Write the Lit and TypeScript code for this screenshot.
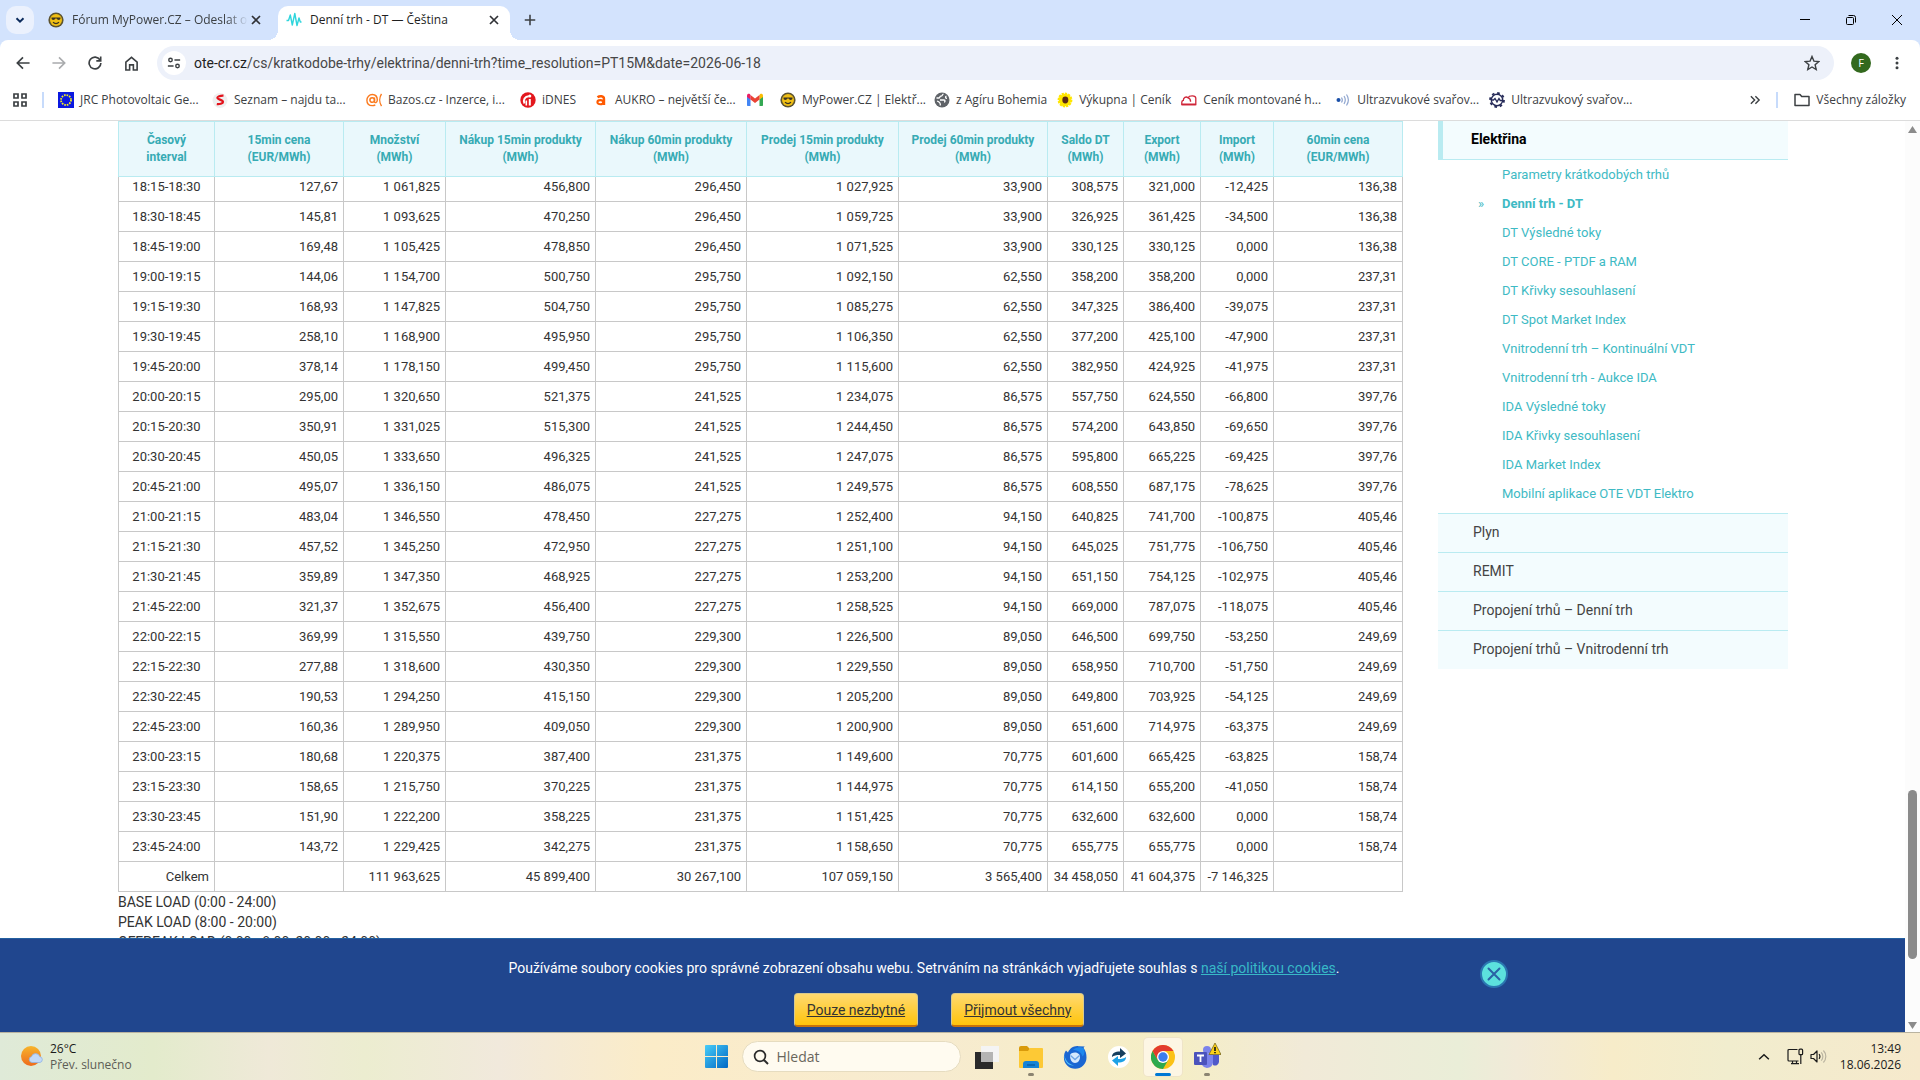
import { LitElement, html, css, svg, type TemplateResult } from "lit";
import { customElement } from "lit/decorators.js";

/* ---------- data ---------- */

const COLUMNS: [string, string, number][] = [
  ["Časový", "interval", 96],
  ["15min cena", "(EUR/MWh)", 129],
  ["Množství", "(MWh)", 102],
  ["Nákup 15min produkty", "(MWh)", 150],
  ["Nákup 60min produkty", "(MWh)", 151],
  ["Prodej 15min produkty", "(MWh)", 152],
  ["Prodej 60min produkty", "(MWh)", 149],
  ["Saldo DT", "(MWh)", 76],
  ["Export", "(MWh)", 77],
  ["Import", "(MWh)", 73],
  ["60min cena", "(EUR/MWh)", 129],
];

const ROWS: string[][] = `
18:15-18:30|127,67|1 061,825|456,800|296,450|1 027,925|33,900|308,575|321,000|-12,425|136,38
18:30-18:45|145,81|1 093,625|470,250|296,450|1 059,725|33,900|326,925|361,425|-34,500|136,38
18:45-19:00|169,48|1 105,425|478,850|296,450|1 071,525|33,900|330,125|330,125|0,000|136,38
19:00-19:15|144,06|1 154,700|500,750|295,750|1 092,150|62,550|358,200|358,200|0,000|237,31
19:15-19:30|168,93|1 147,825|504,750|295,750|1 085,275|62,550|347,325|386,400|-39,075|237,31
19:30-19:45|258,10|1 168,900|495,950|295,750|1 106,350|62,550|377,200|425,100|-47,900|237,31
19:45-20:00|378,14|1 178,150|499,450|295,750|1 115,600|62,550|382,950|424,925|-41,975|237,31
20:00-20:15|295,00|1 320,650|521,375|241,525|1 234,075|86,575|557,750|624,550|-66,800|397,76
20:15-20:30|350,91|1 331,025|515,300|241,525|1 244,450|86,575|574,200|643,850|-69,650|397,76
20:30-20:45|450,05|1 333,650|496,325|241,525|1 247,075|86,575|595,800|665,225|-69,425|397,76
20:45-21:00|495,07|1 336,150|486,075|241,525|1 249,575|86,575|608,550|687,175|-78,625|397,76
21:00-21:15|483,04|1 346,550|478,450|227,275|1 252,400|94,150|640,825|741,700|-100,875|405,46
21:15-21:30|457,52|1 345,250|472,950|227,275|1 251,100|94,150|645,025|751,775|-106,750|405,46
21:30-21:45|359,89|1 347,350|468,925|227,275|1 253,200|94,150|651,150|754,125|-102,975|405,46
21:45-22:00|321,37|1 352,675|456,400|227,275|1 258,525|94,150|669,000|787,075|-118,075|405,46
22:00-22:15|369,99|1 315,550|439,750|229,300|1 226,500|89,050|646,500|699,750|-53,250|249,69
22:15-22:30|277,88|1 318,600|430,350|229,300|1 229,550|89,050|658,950|710,700|-51,750|249,69
22:30-22:45|190,53|1 294,250|415,150|229,300|1 205,200|89,050|649,800|703,925|-54,125|249,69
22:45-23:00|160,36|1 289,950|409,050|229,300|1 200,900|89,050|651,600|714,975|-63,375|249,69
23:00-23:15|180,68|1 220,375|387,400|231,375|1 149,600|70,775|601,600|665,425|-63,825|158,74
23:15-23:30|158,65|1 215,750|370,225|231,375|1 144,975|70,775|614,150|655,200|-41,050|158,74
23:30-23:45|151,90|1 222,200|358,225|231,375|1 151,425|70,775|632,600|632,600|0,000|158,74
23:45-24:00|143,72|1 229,425|342,275|231,375|1 158,650|70,775|655,775|655,775|0,000|158,74
`.trim().split("\n").map((line) => line.split("|"));

const TOTALS = ["Celkem", "", "111 963,625", "45 899,400", "30 267,100", "107 059,150", "3 565,400", "34 458,050", "41 604,375", "-7 146,325", ""];

const SUBMENU = [
  "Parametry krátkodobých trhů", "Denní trh - DT", "DT Výsledné toky", "DT CORE - PTDF a RAM",
  "DT Křivky sesouhlasení", "DT Spot Market Index", "Vnitrodenní trh – Kontinuální VDT",
  "Vnitrodenní trh - Aukce IDA", "IDA Výsledné toky", "IDA Křivky sesouhlasení",
  "IDA Market Index", "Mobilní aplikace OTE VDT Elektro",
];

const SECTIONS = ["Plyn", "REMIT", "Propojení trhů – Denní trh", "Propojení trhů – Vnitrodenní trh"];

/* ---------- icons ---------- */

const icon = (size: number, body: TemplateResult, box = 16) =>
  html`<svg width=${size} height=${size} viewBox="0 0 ${box} ${box}" fill="none" aria-hidden="true">${body}</svg>`;

const sunFace = svg`<circle cx="8" cy="8" r="7.6" fill="#5c5330"/><circle cx="8" cy="8" r="6" fill="#f0bf14"/>
  <path d="M3.500 5.400h9v.9c0 1-.8 1.700-1.800 1.700s-1.800-.6-2.100-1.400H7.400C7.100 7.400 6.300 8 5.300 8s-1.800-.7-1.800-1.700z" fill="#3a3322"/>
  <path d="M5 10.200c1.600 1.800 4.400 1.800 6 0" stroke="#3a3322" stroke-width="1.200"/>`;
const euFlag = svg`<rect width="16" height="16" fill="#0a18e0"/><circle cx="8" cy="8" r="5" stroke="#f5ee20" stroke-width="1.800" stroke-dasharray="1.600 1.018"/>`;
const seznam = svg`<circle cx="8" cy="8.500" r="7.500" fill="#efefef"/><path d="M11.500 3.700C8.500 3.500 5 4.600 5.500 6.200c.5 1.300 5.500 1.800 5.500 3.800 0 1.600-3.800 2.500-6.200 2.100" stroke="#e3121b" stroke-width="2.200"/>`;
const bazos = svg`<circle cx="6.200" cy="8" r="2.300" stroke="#fb7a1e" stroke-width="1.500"/><path d="M8.500 5.500v4c0 2 2.800 1.300 2.800-1.500 0-3.300-2-5.500-5-5.500S.9 5 .9 8.200s2 5.400 5.400 5.400c1.200 0 2.200-.3 3-.8M15.500 2c-2.300 3.500-2.300 8.500 0 12" stroke="#fb7a1e" stroke-width="1.400"/>`;
const idnes = svg`<circle cx="8" cy="8" r="7.700" fill="#e3171d"/><path d="M9.800 7v6.500M4.500 11.500c-1.800-3.500.5-7.300 4.300-7.300" stroke="#fff" stroke-width="2"/><circle cx="9.800" cy="4" r="1.500" fill="#fff"/><path d="M6.300 8.500v5" stroke="#fff" stroke-width="1.600"/>`;
const aukro = svg`<path d="M4.500 5.300c2-1.500 6.500-1.700 6.500 1.700V13" stroke="#ff5a00" stroke-width="2.400"/><ellipse cx="7.300" cy="10.200" rx="2.900" ry="2.100" stroke="#ff5a00" stroke-width="2.100"/>`;
const gmail = svg`<path d="M0 3.500V13c0 .6.400 1 1 1h2.500V7z" fill="#4285f4"/><path d="M12.500 14H15c.6 0 1-.4 1-1V3.500L12.500 7z" fill="#34a853"/><path d="M12.500 3v4.500L16 5V3.600c0-1.600-1.800-2.300-3-1.400z" fill="#fbbc04"/><path d="M3.500 7.500V3L8 6.500 12.500 3v4.500L8 11z" fill="#ea4335"/><path d="M0 3.600V5l3.500 2.500V3L3 2.200C1.800 1.300 0 2 0 3.600z" fill="#e91e63"/>`;
const globe = svg`<circle cx="8" cy="8" r="7.500" fill="#5f6368"/><path d="M9.500 2c-1.500.5-1 2.200-2.600 2.200C5.600 4.200 6 6 4.700 6H2.500M6 8h4c1.400 0 1.400 2.200 0 2.200M12.500 4c-1.500.6-1.200 2.400.5 2.400M3 9c2.500.8 3.700 2 3.300 4.500" stroke="#fff" stroke-width="1.300"/>`;
const sunflower = svg`<circle cx="8" cy="8" r="6.300" fill="#ffe600" stroke="#ffe600" stroke-width="2.200" stroke-dasharray="2.200 1"/><ellipse cx="8.300" cy="8" rx="3" ry="3.400" fill="#5b2a12"/>`;
const houses = svg`<path d="M.8 12.600v-2.300c0-1 .5-1.700 1.500-1.900 0-2.800 2.700-4.300 4.700-2.700C8.200 3.300 14.800 3 14.800 6.200v6.400z" stroke="#cf2538" stroke-width="1.300"/><path d="M.8 12.400h14" stroke="#cf2538" stroke-width="1.800"/><path d="M7 5.700c1.600.6 2.600 1.600 2.600 4" stroke="#cf2538" stroke-width="1.300"/>`;
const sonic = svg`<circle cx="3.500" cy="8" r="2" fill="#1a4fa8"/><path d="M6.500 5.500c1 1.500 1 3.500 0 5M9 4c1.600 2.500 1.600 5.500 0 8M11.500 2.500c2.400 3.500 2.400 7.500 0 11" stroke="#8fa5cf" stroke-width="1.200"/>`;
const gear = svg`<circle cx="8" cy="8" r="5.700" stroke="#262b59" stroke-width="1.400"/><circle cx="8" cy="8" r="7" stroke="#262b59" stroke-width="1.800" stroke-dasharray="2.600 2.898"/><path d="M2.500 8h2L6 6.500l2 3.400 2-3.400L11.200 8.500h2.300" stroke="#262b59" stroke-width="1.300"/>`;
const wave = svg`<path d="M.5 8.500h2L4.300 3l2 10L8.800 1.500l2.200 12L13 6l1.300 4h1.200" stroke="#2fd5dc" stroke-width="1.400" stroke-linejoin="round"/>`;
const cross = svg`<path d="M4 4l8 8M12 4l-8 8" stroke="#303236" stroke-width="1.700"/>`;

const BOOKMARKS: [string, TemplateResult, string][] = [
  ["JRC Photovoltaic Ge...", euFlag, "wide"],
  ["Seznam – najdu ta...", seznam, "wide"],
  ["Bazos.cz - Inzerce, i...", bazos, "wide"],
  ["iDNES", idnes, ""],
  ["AUKRO – největší če...", aukro, "wide"],
  ["", gmail, ""],
  ["MyPower.CZ | Elektř...", sunFace, "wide"],
  ["z Agíru Bohemia", globe, "short"],
  ["Výkupna | Ceník", sunflower, "short"],
  ["Ceník montované h...", houses, "wide"],
  ["Ultrazvukové svařov...", sonic, "wide"],
  ["Ultrazvukový svařov...", gear, "wide"],
];

/* ---------- browser chrome ---------- */

@customElement("browser-chrome")
class BrowserChrome extends LitElement {
  static styles = css`
    :host { display: block; font: 12px/16px "Segoe UI", "Open Sans", sans-serif; color: #3c4043; background: #d3e3fd; }
    button { border: 0; padding: 0; margin: 0; background: none; font: inherit; color: inherit; display: grid; place-items: center; }
    svg { display: block; flex: none; }
    .tabs { display: flex; height: 40px; padding-left: 6px; }
    .search { width: 28px; height: 28px; margin: 6px 14px 0 0; border-radius: 10px; background: #ebf1fd; }
    .tab { display: flex; align-items: center; gap: 8px; height: 28px; margin-top: 6px; }
    .idle { width: 216px; margin-right: 14px; }
    .idle .title { margin-right: -8px; }
    .title { flex: 1; overflow: hidden; white-space: nowrap; }
    .fade { mask-image: linear-gradient(90deg, #000 88%, transparent); }
    .active { position: relative; box-sizing: border-box; width: 232px; height: 34px; padding: 0 8px 6px 8px; background: #fff; border-radius: 10px 10px 0 0; color: #1f1f1f; }
    .active::before, .active::after { content: ""; position: absolute; bottom: 0; width: 10px; height: 10px; }
    .active::before { left: -10px; background: radial-gradient(circle at 0 0, transparent 10px, #fff 10px); }
    .active::after { right: -10px; background: radial-gradient(circle at 100% 0, transparent 10px, #fff 10px); }
    .plus { width: 28px; margin-left: 6px; }
    .window { display: flex; margin-left: auto; }
    .window button { width: 46px; height: 40px; }
    .bar { display: flex; align-items: center; height: 46px; padding: 0 9px; background: #fff; border-radius: 8px 8px 0 0; }
    .nav { width: 36px; height: 34px; margin-left: -4px; margin-right: 4px; }
    .address { flex: 1; display: flex; align-items: center; height: 34px; margin: 0 17px 0 4px; padding: 0 14px 0 5px; border-radius: 17px; background: #edf1fa; }
    .info { width: 24px; height: 24px; border-radius: 12px; background: #fff; margin-right: 8px; }
    .url { flex: 1; font: 14px/20px "Segoe UI", Roboto, sans-serif; color: #474747; outline: 0; }
    .host { color: #1f1f1f; }
    .avatar { width: 20px; height: 20px; border-radius: 10px; background: #33691e; color: #fff; font-size: 11px; }
    .menu { width: 20px; height: 28px; margin: 0 4px 0 16px; }
    .marks { display: flex; align-items: center; height: 28px; padding: 0 14px 6px 12px; background: #fff; border-bottom: 1px solid #dcdcdc; }
    .rule { width: 2px; height: 16px; background: #c7dbfb; }
    .apps { margin-right: 14px; }
    .list { display: flex; margin-left: 14px; flex: 1; min-width: 0; }
    .mark { display: flex; align-items: center; gap: 6px; margin-right: 17px; color: inherit; text-decoration: none; white-space: nowrap; }
    .wide { width: 137px; }
    .short { margin-right: 10px; }
    .more { margin-right: 15px; }
    .all { display: flex; align-items: center; gap: 6px; margin-left: 16px; white-space: nowrap; }
  `;

  render() {
    return html`
      <div class="tabs">
        <button class="search" aria-label="Hledat na kartách">${icon(14, svg`<path d="M4 6l4 4 4-4" stroke="#0b2a5c" stroke-width="2.200"/>`)}</button>
        <div class="tab idle">${icon(16, sunFace)}<span class="title fade">Fórum MyPower.CZ – Odeslat o</span>
          <button aria-label="Zavřít">${icon(16, cross)}</button></div>
        <div class="tab active">${icon(16, wave)}<span class="title">Denní trh - DT — Čeština</span>
          <button aria-label="Zavřít">${icon(16, cross)}</button></div>
        <button class="plus" aria-label="Nová karta">${icon(14, svg`<path d="M8 2v12M2 8h12" stroke="#3c4043" stroke-width="1.800"/>`)}</button>
        <div class="window">
          <button aria-label="Minimalizovat">${icon(10, svg`<path d="M0 4.500h10" stroke="#000"/>`, 10)}</button>
          <button aria-label="Obnovit">${icon(10, svg`<rect x=".5" y="2.500" width="7" height="7" rx="1" stroke="#000"/><path d="M2.500.5h5a2 2 0 012 2v5" stroke="#000"/>`, 10)}</button>
          <button aria-label="Zavřít okno">${icon(10, svg`<path d="M0 0l10 10M10 0L0 10" stroke="#000"/>`, 10)}</button>
        </div>
      </div>
      <div class="bar">
        <button class="nav" aria-label="Zpět">${icon(14, svg`<path d="M15.500 8H2M8 1.500L1.500 8 8 14.500" stroke="#3c4043" stroke-width="1.900"/>`)}</button>
        <button class="nav" aria-label="Vpřed">${icon(14, svg`<path d="M.5 8H14M8 1.500L14.500 8 8 14.500" stroke="#a9abad" stroke-width="1.900"/>`)}</button>
        <button class="nav" aria-label="Obnovit stránku">${icon(14, svg`<path d="M13.700 4.500A6.700 6.700 0 1014.700 8M14.500.5v5h-5" stroke="#3c4043" stroke-width="1.900"/>`)}</button>
        <button class="nav" aria-label="Domů">${icon(15, svg`<path d="M2 6.500L8 1.500l6 5V15h-4V9.500H6V15H2z" stroke="#3c4043" stroke-width="1.700"/>`)}</button>
        <div class="address">
          <button class="info" aria-label="Informace o webu">${icon(14, svg`<circle cx="4" cy="4.500" r="2" stroke="#3c4043" stroke-width="1.600"/><circle cx="12" cy="11.500" r="2" stroke="#3c4043" stroke-width="1.600"/><path d="M8.500 4.500H15M1 11.500h6.500" stroke="#3c4043" stroke-width="1.700"/>`)}</button>
          <div class="url" role="textbox" aria-label="Adresa" contenteditable="plaintext-only" spellcheck="false"><span class="host">ote-cr.cz</span>/cs/kratkodobe-trhy/elektrina/denni-trh?time_resolution=PT15M&amp;date=2026-06-18</div>
          <button aria-label="Přidat záložku">${icon(16, svg`<path d="M8 1.500l1.900 4.600 4.900.4-3.700 3.200 1.100 4.800L8 12l-4.200 2.500 1.100-4.800L1.200 6.500l4.900-.4z" stroke="#3c4043" stroke-width="1.400"/>`)}</button>
        </div>
        <button class="avatar" aria-label="Profil">F</button>
        <button class="menu" aria-label="Nabídka">${icon(16, svg`<circle cx="8" cy="3.200" r="1.500" fill="#3c4043"/><circle cx="8" cy="8" r="1.500" fill="#3c4043"/><circle cx="8" cy="12.800" r="1.500" fill="#3c4043"/>`)}</button>
      </div>
      <nav class="marks">
        <button class="apps" aria-label="Aplikace">${icon(16, svg`<path d="M2 2h4v4H2zM10 2h4v4h-4zM2 10h4v4H2zM10 10h4v4h-4z" stroke="#3c4043" stroke-width="1.700"/>`)}</button>
        <span class="rule"></span>
        <div class="list">
          ${BOOKMARKS.map(([label, art, size]) => html`<a class="mark ${size}" href="#" aria-label=${label || "Gmail"}>${icon(16, art)}${label}</a>`)}
        </div>
        <button class="more" aria-label="Další záložky">${icon(12, svg`<path d="M2.500 3l5 5-5 5M8.500 3l5 5-5 5" stroke="#3c4043" stroke-width="1.900"/>`)}</button>
        <span class="rule"></span>
        <button class="all">${icon(16, svg`<path d="M1 13.500v-11h5l1.700 2H15v9z" stroke="#3c4043" stroke-width="1.500" stroke-linejoin="round"/>`)}Všechny záložky</button>
      </nav>`;
  }
}

/* ---------- price table ---------- */

@customElement("price-table")
class PriceTable extends LitElement {
  static styles = css`
    :host { display: block; font: 14px/20px Roboto, sans-serif; color: #333; }
    table { width: 100%; table-layout: fixed; border-collapse: collapse; font-size: 13px; line-height: 20px; }
    th { height: 55px; padding: 0 2px; box-sizing: border-box; border: 1px solid #b9ebf1; background: #eaf8fc; color: #37abb4; font-size: 12px; line-height: 17px; font-weight: 700; text-align: center; white-space: nowrap; }
    td { height: 29px; padding: 0 5px; border: 1px solid #c8c8c8; text-align: right; white-space: nowrap; }
    .period { text-align: center; }
    /* partly hidden under the pinned header */
    .cut td { height: 25px; line-height: 14px; padding-bottom: 5px; box-sizing: border-box; }
    p { margin: 0; }
  `;

  render() {
    return html`
      <table>
        <colgroup>${COLUMNS.map(([, , w]) => html`<col style="width:${w}px">`)}</colgroup>
        <thead><tr>${COLUMNS.map(([a, b]) => html`<th scope="col">${a}<br>${b}</th>`)}</tr></thead>
        <tbody>
          ${ROWS.map((row, i) => html`<tr class=${i === 0 ? "cut" : ""}>${row.map((v, c) => html`<td class=${c === 0 ? "period" : ""}>${v}</td>`)}</tr>`)}
          <tr>${TOTALS.map((v) => html`<td>${v}</td>`)}</tr>
        </tbody>
      </table>
      <p>BASE LOAD (0:00 - 24:00)</p>
      <p>PEAK LOAD (8:00 - 20:00)</p>
      <p>OFFPEAK LOAD (0:00 - 8:00, 20:00 - 24:00)</p>`;
  }
}

/* ---------- side menu ---------- */

@customElement("side-menu")
class SideMenu extends LitElement {
  static styles = css`
    :host { display: block; font: 14px/20px Roboto, sans-serif; }
    a { text-decoration: none; color: inherit; }
    ul { list-style: none; margin: 0; padding: 0; }
    .head { display: block; padding: 8px 0 10px 28px; border-left: 5px solid #b9ebf1; border-bottom: 1px solid #b9ebf1; background: #f3fcfe; color: #000; font-weight: 700; }
    .sub { padding-bottom: 5px; font-size: 13px; line-height: 29px; color: #3ebac4; }
    .sub li { display: grid; grid-template-columns: 24px 1fr; padding-left: 40px; }
    .current { font-weight: 700; }
    .section { display: block; padding: 8px 0 10px 35px; border-top: 1px solid #b9ebf1; background: #f3fcfe; color: #444; }
  `;

  render() {
    return html`<nav>
      <a class="head" href="#">Elektřina</a>
      <ul class="sub">${SUBMENU.map((t, i) => html`<li><span>${i === 1 ? "»" : ""}</span><a class=${i === 1 ? "current" : ""} href="#">${t}</a></li>`)}</ul>
      ${SECTIONS.map((t) => html`<a class="section" href="#">${t}</a>`)}
    </nav>`;
  }
}

/* ---------- cookie bar ---------- */

@customElement("cookie-bar")
class CookieBar extends LitElement {
  static styles = css`
    :host { display: grid; grid-template-columns: 1fr 425px; box-sizing: border-box; height: 94px; padding: 19px 0 4px 368px; background: #20468e; border-top: 1px solid #2360a0; color: #fff; font: 14px/20px Roboto, sans-serif; }
    p { margin: 0; text-align: center; }
    p a { color: #38b9c7; }
    .choices { display: flex; justify-content: center; gap: 33px; padding: 15px 0 0 30px; }
    .choice { box-sizing: border-box; height: 34px; padding: 0 12px; border: 1px solid #d8c98c; border-bottom: 2px solid #c8730a; border-radius: 4px; background: linear-gradient(#ffd970, #ffc40c); color: #333; font: inherit; text-decoration: underline; }
    .close { width: 28px; height: 28px; padding: 0; margin-top: 2px; border: 2px solid #2a76b0; border-radius: 14px; background: #5ce1dd; display: grid; place-items: center; }
  `;

  render() {
    return html`
      <div>
        <p>Používáme soubory cookies pro správné zobrazení obsahu webu. Setrváním na stránkách vyjadřujete souhlas s <a href="#">naší politikou cookies</a>.</p>
        <div class="choices"><button class="choice">Pouze nezbytné</button><button class="choice">Přijmout všechny</button></div>
      </div>
      <button class="close" aria-label="Zavřít">${icon(16, svg`<path d="M2.500 2.500l11 11M13.500 2.500l-11 11" stroke="#2a63a5" stroke-width="2" stroke-linecap="round"/>`)}</button>`;
  }
}

/* ---------- taskbar ---------- */

@customElement("task-bar")
class TaskBar extends LitElement {
  static styles = css`
    :host { display: grid; grid-template-columns: 1fr auto 1fr; align-items: center; box-sizing: border-box; height: 48px; padding: 0 19px 0 20px; border-top: 1px solid #b9b3a0;
      background: linear-gradient(90deg, #dfead8 0%, #e3ebcc 8%, #efe9d8 14%, #ecedd0 19%, #f1e9dc 26%, #fbecc8 34%, #f7ebd0 48%, #f5eec5 61%, #f1ead8 68%, #eaeed8 76%, #f1ead8 79%, #f7ecc9 84%, #f1edce 90%, #f6e9cc 100%);
      font: 12px/16px "Segoe UI", "Open Sans", sans-serif; color: #1b1b1b; }
    button { border: 0; padding: 0; background: none; font: inherit; color: inherit; }
    svg { display: block; }
    .weather { display: flex; align-items: center; gap: 6px; text-align: left; }
    .dim { color: #5d5d56; }
    .apps { display: flex; align-items: center; padding-left: 12px; }
    .start { margin-right: 14px; }
    .search { display: flex; align-items: center; gap: 8px; box-sizing: border-box; width: 219px; height: 31px; padding: 0 10px; margin-right: 4px; border: 1px solid #e6dcc0; border-radius: 16px; background: #fffbf0; }
    .search input { flex: 1; min-width: 0; border: 0; padding: 0; background: none; font: 14px/20px "Segoe UI", "Open Sans", sans-serif; outline: 0; }
    .search input::placeholder { color: #6a665c; opacity: 1; }
    .app { position: relative; width: 38px; height: 38px; margin: 0 3px; display: grid; place-items: center; border-radius: 4px; }
    .open { background: #fdf6e4; box-shadow: 0 0 0 1px #efe4c8; }
    .dot::after, .open::after { content: ""; position: absolute; bottom: 0; width: 6px; height: 3px; border-radius: 2px; background: #8b8471; }
    .open::after { width: 16px; background: #0078d4; }
    .tray { display: flex; align-items: center; justify-content: flex-end; }
    .chevron { margin-right: 17px; }
    .net { margin-right: 6px; }
    .clock { margin-left: 13px; text-align: right; }
  `;

  render() {
    return html`
      <button class="weather">${icon(24, svg`<defs><linearGradient id="sun" x1="0" y1="0" x2="0" y2="1"><stop stop-color="#f7b52c"/><stop offset="1" stop-color="#ee6b1c"/></linearGradient></defs>
        <circle cx="11" cy="11" r="10" fill="url(#sun)"/><path d="M12 17.500a3 3 0 01-.5-5.900 4.300 4.300 0 018.200 0 3 3 0 01.3 5.900z" fill="#c3d9f7" stroke="#8fb2e4" stroke-width=".8"/>`, 24)}
        <span>26°C<br><span class="dim">Přev. slunečno</span></span></button>
      <div class="apps">
        <button class="start" aria-label="Start">${icon(23, svg`<defs><linearGradient id="win" x1="0" y1="0" x2="1" y2="1"><stop stop-color="#48cdf8"/><stop offset="1" stop-color="#0067c4"/></linearGradient></defs>
          <path d="M0 1a1 1 0 011-1h10v11H0zM12 0h10a1 1 0 011 1v10H12zM0 12h11v11H1a1 1 0 01-1-1zM12 12h11v10a1 1 0 01-1 1H12z" fill="url(#win)"/>`, 23)}</button>
        <label class="search">${icon(16, svg`<circle cx="7" cy="7" r="5.400" stroke="#2b2b2b" stroke-width="1.700"/><path d="M11 11l4 4" stroke="#2b2b2b" stroke-width="2"/>`)}<input type="text" placeholder="Hledat" aria-label="Hledat"></label>
        <button class="app" aria-label="Zobrazení úkolů">${icon(24, svg`<rect x="0" y="7" width="18" height="17" fill="#2a2a2a"/><rect x="6" y="1" width="18" height="16" fill="#f4f4f4"/><path d="M6 7h12v10H6z" fill="#b4b4b4"/>`, 24)}</button>
        <button class="app dot" aria-label="Průzkumník">${icon(24, svg`<path d="M0 3a2 2 0 012-2h6l3 3v4H0z" fill="#d99a0b"/><path d="M0 6h9l2-3h12a1 1 0 011 1v18a1 1 0 01-1 1H1a1 1 0 01-1-1z" fill="#fdc935"/><path d="M4 23v-4a3 3 0 013-3h10a3 3 0 013 3v4z" fill="#1583d6"/><path d="M8 20h8" stroke="#0a5fa6" stroke-width="1.500"/>`, 24)}</button>
        <button class="app" aria-label="Thunderbird">${icon(24, svg`<path d="M23.500 12.500a11.300 11.300 0 01-22.600 0c0-2.500.6-5 2.100-7l2 2C6.500 3.500 11 .5 15.500 1.200l6.500.3c-1 .4-1.400 1-1.400 1.800 2.200 2.400 2.900 5.700 2.900 9.200z" fill="#1a66d2"/><path d="M10 5c3-3.500 8-3.500 11-1.500 1 3.500.5 6-1.500 8-1-4-4.500-6.500-9.500-6.500z" fill="#1e88ee"/><path d="M1.500 8.500c0 6 3.500 10.500 9.500 12C5 21 .8 16.500 1.500 8.500z" fill="#4cc2fa"/><path d="M7 10.500c0-2 2.500-3 5-3s5 1.500 5 4.500-2 6-5 6-5-3-5-7.500z" fill="#d5e8fd"/><path d="M7.500 10.500l4.500 4 4.500-4" stroke="#6fa4e4" stroke-width="1.400"/>`, 24)}</button>
        <button class="app" aria-label="Synchronizace">${icon(24, svg`<circle cx="12" cy="12" r="11" fill="#fff"/><path d="M5 12c0-4 3-5.500 8-5.500V3l6 5.500-6 4.500v-3c-4 0-6 .5-8 2z" fill="#173f5f"/><path d="M19 12c0 4-3 5.500-8 5.500V21l-6-5.500L11 11v3c4 0 6-.5 8-2z" fill="#1da1e6"/>`, 24)}</button>
        <button class="app open" aria-label="Chrome">${icon(24, svg`<circle cx="12" cy="12" r="12" fill="#fbc116"/><path d="M1.600 6L6.800 15l5.200 3 5.200-3L12 24A12 12 0 011.600 6z" fill="#2da94f"/><path d="M1.600 6A12 12 0 0122.400 6H12l-5.200 9z" fill="#e33b2e"/><circle cx="12" cy="12" r="6" fill="#fff"/><circle cx="12" cy="12" r="4.700" fill="#3b7ded"/>`, 24)}</button>
        <button class="app dot" aria-label="Teams">${icon(28, svg`<circle cx="14" cy="7" r="4" fill="#7b83eb"/><path d="M9 11h11v9a6 6 0 01-11 2z" fill="#7b83eb"/><path d="M20 12h6v7a4 4 0 01-6 3z" fill="#5059c9"/><rect x="1" y="9" width="13" height="13" rx="1" fill="#4b53bc"/><path d="M4 12.500h7M7.500 12.500V19" stroke="#fff" stroke-width="1.800"/><path d="M22 0l6 11.500H16z" fill="#fcd116" stroke="#7a6a20" stroke-width=".8"/><path d="M22 4v4M22 9v1.300" stroke="#111" stroke-width="1.600"/>`, 28)}</button>
      </div>
      <div class="tray">
        <button class="chevron" aria-label="Skryté ikony">${icon(12, svg`<path d="M1.500 11L8 5l6.500 6" stroke="#1b1b1b" stroke-width="2"/>`)}</button>
        <button class="net" aria-label="Síť">${icon(17, svg`<path d="M10.500 1.500H2a1 1 0 00-1 1v9.500a1 1 0 001 1h9.500M5.500 13v2.500M9.500 13v2.500M4 15.700h8" stroke="#1b1b1b" stroke-width="1.200"/><rect x="12" y="1.200" width="3.600" height="5.500" rx="1" stroke="#1b1b1b" stroke-width="1.200"/><path d="M13.800 6.700V16" stroke="#1b1b1b" stroke-width="1.200"/>`, 17)}</button>
        <button aria-label="Hlasitost">${icon(17, svg`<path d="M1 6.500h2.500L7 3v11l-3.500-3.500H1z" stroke="#1b1b1b" stroke-width="1.200" stroke-linejoin="round"/><path d="M9 6.200c1.200 1.200 1.200 3.400 0 4.600" stroke="#1b1b1b" stroke-width="1.200"/><path d="M11.200 4.300c2.200 2.300 2.200 6 0 8.400M13.400 2.500c3.200 3.300 3.200 8.700 0 12" stroke="#b9b3a0" stroke-width="1.200"/>`, 17)}</button>
        <button class="clock">13:49<br>18.06.2026</button>
      </div>`;
  }
}

/* ---------- desktop ---------- */

@customElement("app-root")
class AppRoot extends LitElement {
  static styles = css`
    :host { display: flex; flex-direction: column; height: 100vh; overflow: hidden; }
    .view { flex: 1; min-height: 0; display: flex; background: #fff; }
    .page { flex: 1; min-width: 0; display: flex; flex-direction: column; }
    .content { flex: 1; min-height: 0; overflow: hidden; display: grid; grid-template-columns: minmax(0, 1fr) 350px; align-items: start; gap: 36px; padding: 0 117px 0 118px; }
    .scroll { display: flex; flex-direction: column; align-items: center; width: 15px; padding: 5px 0 3px; box-sizing: border-box; background: #fcfcfc; }
    .arrow { width: 9px; height: 7px; background: #8b8b8b; clip-path: polygon(50% 0, 100% 100%, 0 100%); }
    .down { clip-path: polygon(0 0, 100% 0, 50% 100%); }
    .track { flex: 1; display: flex; flex-direction: column; padding: 3px 0; }
    .before { flex: 652; }
    .thumb { flex: 168; width: 9px; border-radius: 5px; background: #8b8b8b; }
    .after { flex: 60; }
  `;

  render() {
    return html`
      <browser-chrome></browser-chrome>
      <div class="view">
        <div class="page">
          <main class="content"><price-table></price-table><side-menu></side-menu></main>
          <cookie-bar></cookie-bar>
        </div>
        <div class="scroll"><span class="arrow"></span><div class="track"><span class="before"></span><span class="thumb"></span><span class="after"></span></div><span class="arrow down"></span></div>
      </div>
      <task-bar></task-bar>`;
  }
}
